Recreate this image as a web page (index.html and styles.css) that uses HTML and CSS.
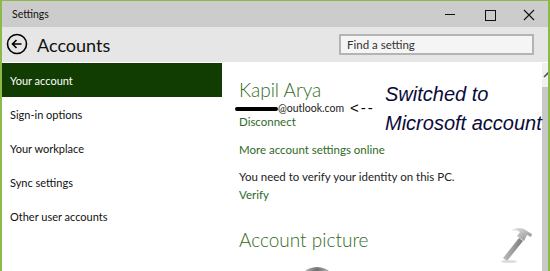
FILE: index.html
```html
<!DOCTYPE html>
<html>
<head>
<meta charset="utf-8">
<link rel="stylesheet" href="styles.css">
</head>
<body>
<div class="window">
  <div class="titlebar">
    <span class="title">Settings</span>
    <div class="controls">
      <svg class="ctl" width="40" height="26" viewBox="0 0 40 26"><line x1="17" y1="13.5" x2="27" y2="13.5" stroke="#111" stroke-width="1"/></svg>
      <svg class="ctl" width="40" height="26" viewBox="0 0 40 26"><rect x="17.5" y="9.5" width="10" height="10" fill="none" stroke="#111" stroke-width="1"/></svg>
      <svg class="ctl" width="40" height="26" viewBox="0 0 40 26"><path d="M16 9 L26 19 M26 9 L16 19" stroke="#111" stroke-width="1.1"/></svg>
    </div>
  </div>
  <div class="header">
    <svg class="back" width="22" height="22" viewBox="0 0 22 22">
      <circle cx="11" cy="11" r="9.5" fill="none" stroke="#000" stroke-width="1.6"/>
      <path d="M15.5 11 H6.5 M10.5 7 L6.5 11 L10.5 15" fill="none" stroke="#000" stroke-width="1.6"/>
    </svg>
    <span class="heading">Accounts</span>
    <div class="search">Find a setting</div>
  </div>
  <div class="main">
    <nav class="nav">
      <div class="item active">Your account</div>
      <div class="item">Sign-in options</div>
      <div class="item">Your workplace</div>
      <div class="item">Sync settings</div>
      <div class="item">Other user accounts</div>
    </nav>
    <section class="content">
      <div class="account">
        <div class="who">
          <div class="name">Kapil Arya</div>
          <div class="email"><span class="redact"></span>@outlook.com <span class="arrow">&lt;--</span></div>
          <div class="link">Disconnect</div>
        </div>
        <div class="note">Switched to<br>Microsoft account</div>
      </div>
      <div class="link more">More account settings online</div>
      <div class="text">You need to verify your identity on this PC.</div>
      <div class="link verify">Verify</div>
      <div class="subhead">Account picture</div>
      <div class="avatar"></div>
      <svg class="hammer" width="36" height="40" viewBox="0 0 36 40">
        <defs>
          <linearGradient id="hg" x1="0" y1="0" x2="1" y2="1">
            <stop offset="0" stop-color="#e8e8e8"/>
            <stop offset="1" stop-color="#8a8a8a"/>
          </linearGradient>
          <linearGradient id="sg" x1="0" y1="0" x2="1" y2="0">
            <stop offset="0" stop-color="#bdbdbd"/>
            <stop offset="1" stop-color="#7b7b7b"/>
          </linearGradient>
        </defs>
        <path d="M4 34 L20 14 L24 17 L8 37 Z" fill="url(#sg)"/>
        <path d="M12 7 C16 3 24 3 28 7 L33 10 L32 13 L28 11 L25 17 L18 12 L21 8 C18 6 15 6 12 7 Z" fill="url(#hg)"/>
        <ellipse cx="10" cy="37.5" rx="8" ry="1.3" fill="#d8d8d8"/>
      </svg>
    </section>
    <div class="scrollbar">
      <div class="up"><svg width="10" height="6" viewBox="0 0 10 6"><path d="M1 5 L5 1 L9 5" fill="none" stroke="#555" stroke-width="1.6"/></svg></div>
      <div class="thumb"></div>
    </div>
  </div>
</div>
</body>
</html>
```

FILE: styles.css
```css
* { box-sizing: border-box; }
html, body { margin: 0; padding: 0; }
body {
  width: 550px;
  height: 271px;
  overflow: hidden;
  font-family: Lato, "Open Sans", sans-serif;
  background: #fff;
}
.window {
  width: 550px;
  height: 271px;
  border-top: 1px solid #8db84a;
  border-left: 2px solid #8db84a;
  border-right: 2px solid #8db84a;
  display: flex;
  flex-direction: column;
  overflow: hidden;
}
.titlebar {
  height: 26px;
  flex: none;
  background: #cccccc;
  display: flex;
  align-items: center;
  justify-content: space-between;
}
.title {
  font-size: 10.5px;
  color: #111;
  padding-left: 10px;
}
.controls { display: flex; height: 26px; }
.ctl { display: block; }
.header {
  height: 35px;
  flex: none;
  background: #e6e6e6;
  display: flex;
  align-items: center;
  padding-left: 4px;
}
.back { display: block; margin-top: -1px; }
.heading {
  font-size: 18px;
  color: #111;
  margin-left: 9px;
}
.search {
  margin-left: auto;
  margin-right: 14px;
  width: 195px;
  height: 21px;
  border: 2px solid #b4b4b4;
  background: #f5f5f5;
  font-size: 11.5px;
  color: #333;
  padding: 2px 0 0 6px;
  line-height: 14px;
}
.main {
  flex: 1;
  display: flex;
  min-height: 0;
}
.nav {
  width: 220px;
  flex: none;
  background: #fff;
}
.item {
  height: 34px;
  display: flex;
  align-items: center;
  padding-left: 8px;
  font-size: 11px;
  color: #111;
}
.item.active {
  background: #123d02;
  color: #fff;
  margin-top: 1px;
}
.content {
  flex: 1;
  position: relative;
  padding: 17px 0 0 17px;
  background: #fff;
}
.account { display: flex; align-items: flex-start; }
.who { width: 146px; }
.name {
  font-size: 19px;
  font-weight: 300;
  color: #336b24;
  line-height: 22px;
}
.email {
  font-size: 10.5px;
  line-height: 14px;
  color: #222;
  margin-left: -4px;
  white-space: nowrap;
  display: flex;
  align-items: center;
}
.redact {
  display: inline-block;
  width: 43px;
  height: 4px;
  background: #000;
  border-radius: 2px;
  margin-top: 1px;
}
.arrow {
  font-family: "Liberation Sans", sans-serif;
  font-size: 15px;
  color: #000;
  margin-left: 6px;
  letter-spacing: 2px;
}
.link {
  font-size: 11.5px;
  color: #2e6a1f;
  line-height: 14px;
}
.note {
  font-family: "Liberation Sans", sans-serif;
  font-style: italic;
  font-size: 20px;
  line-height: 29px;
  color: #0b0b3a;
  margin-top: 1px;
  margin-bottom: -9px;
  white-space: nowrap;
}
.more { margin-top: 14px; }
.text {
  font-size: 11.5px;
  color: #222;
  margin-top: 13px;
  line-height: 14px;
}
.verify { margin-top: 4px; }
.subhead {
  font-size: 19px;
  font-weight: 300;
  color: #336b24;
  margin-top: 26px;
  line-height: 24px;
}
.avatar {
  position: absolute;
  left: 75px;
  top: 205px;
  width: 40px;
  height: 40px;
  border-radius: 50%;
  background: radial-gradient(ellipse at 50% 15%, #666 0%, #aaa 35%, #fff 70%);
}
.hammer {
  position: absolute;
  left: 277px;
  top: 162px;
}
.scrollbar {
  width: 12px;
  flex: none;
  background: #f0f0f0;
  display: flex;
  flex-direction: column;
  margin-top: 1px;
}
.up {
  height: 24px;
  display: flex;
  align-items: center;
  justify-content: center;
}
.thumb {
  flex: 1;
  background: #c8c8c8;
}
```
